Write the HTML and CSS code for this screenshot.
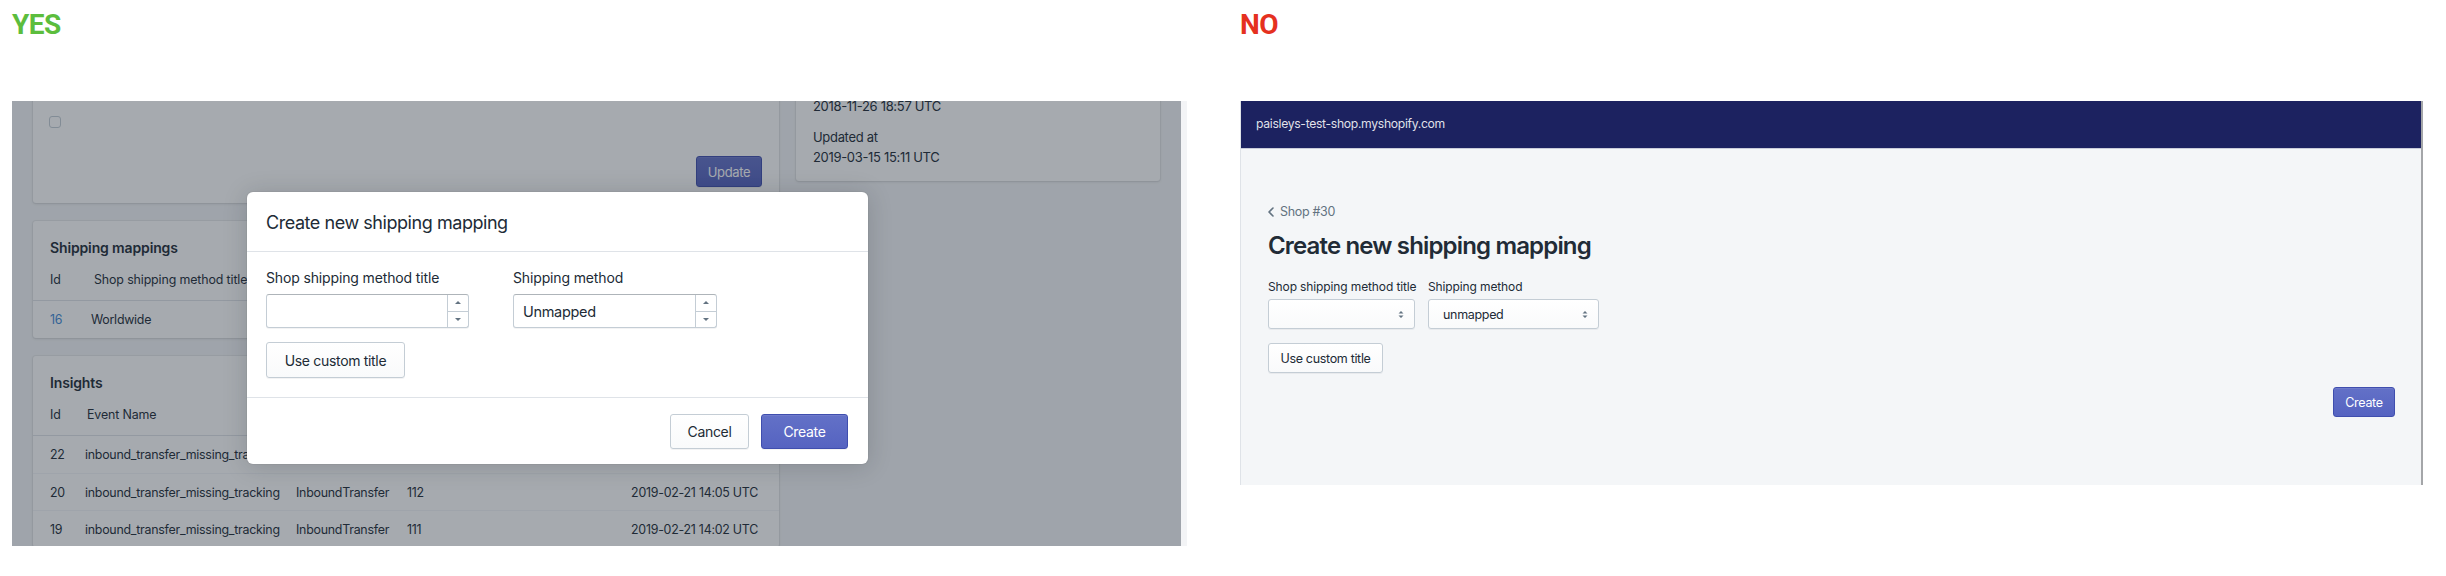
FILE: index.html
```html
<!DOCTYPE html>
<html lang="en">
<head>
<meta charset="utf-8">
<title>Create new shipping mapping – yes / no</title>
<link rel="stylesheet" href="styles.css">
</head>
<body>
<main class="compare">
  <section class="panel panel-yes">
    <h2 class="verdict verdict-yes">YES</h2>
    <div class="shot shot-yes">
      <div class="app">
        <div class="main-col">
          <div class="card card-settings">
            <span class="checkbox"></span>
            <div class="card-actions"><button class="btn-primary btn-update">Update</button></div>
          </div>
          <div class="card">
            <h3 class="card-title">Shipping mappings</h3>
            <div class="table table-mappings">
              <div class="tr th"><span>Id</span><span>Shop shipping method title</span></div>
              <div class="tr"><span class="link">16</span><span>Worldwide</span></div>
            </div>
          </div>
          <div class="card">
            <h3 class="card-title">Insights</h3>
            <div class="table table-insights">
              <div class="tr th"><span>Id</span><span>Event Name</span></div>
              <div class="tr"><span>22</span><span>inbound_transfer_missing_tracking</span></div>
              <div class="tr"><span>20</span><span>inbound_transfer_missing_tracking</span><span>InboundTransfer</span><span>112</span><span class="right">2019-02-21 14:05 UTC</span></div>
              <div class="tr"><span>19</span><span>inbound_transfer_missing_tracking</span><span>InboundTransfer</span><span>111</span><span class="right">2019-02-21 14:02 UTC</span></div>
            </div>
          </div>
        </div>
        <aside class="side-col">
          <div class="card card-meta">
            <span class="meta-first">2018-11-26 18:57 UTC</span>
            <div class="meta-group"><span>Updated at</span><span>2019-03-15 15:11 UTC</span></div>
          </div>
        </aside>
      </div>
      <div class="backdrop"></div>
      <div class="modal" role="dialog" aria-label="Create new shipping mapping">
        <div class="modal-header"><h2 class="modal-title">Create new shipping mapping</h2></div>
        <div class="modal-body">
          <div class="modal-fields">
            <div class="mfield mfield-title">
              <span class="mlabel">Shop shipping method title</span>
              <span class="num-input"><span class="num-value"></span><span class="spinner"><span class="spin"><i class="tri tri-up"></i></span><span class="spin"><i class="tri tri-down"></i></span></span></span>
            </div>
            <div class="mfield mfield-method">
              <span class="mlabel">Shipping method</span>
              <span class="num-input"><span class="num-value">Unmapped</span><span class="spinner"><span class="spin"><i class="tri tri-up"></i></span><span class="spin"><i class="tri tri-down"></i></span></span></span>
            </div>
          </div>
          <button class="btn-secondary btn-custom">Use custom title</button>
        </div>
        <div class="modal-footer">
          <button class="btn-secondary btn-cancel">Cancel</button>
          <button class="btn-primary btn-create">Create</button>
        </div>
      </div>
    </div>
  </section>

  <section class="panel panel-no">
    <h2 class="verdict verdict-no">NO</h2>
    <div class="shot shot-no">
      <header class="topbar">paisleys-test-shop.myshopify.com</header>
      <div class="page">
        <a class="breadcrumb"><svg class="chev" width="6" height="10" viewBox="0 0 6 10"><path d="M5 1 1 5l4 4" fill="none" stroke="#637381" stroke-width="1.6" stroke-linecap="round" stroke-linejoin="round"/></svg>Shop #30</a>
        <h1 class="page-title">Create new shipping mapping</h1>
        <div class="pfields">
          <div class="pfield pfield-title">
            <span class="plabel">Shop shipping method title</span>
            <span class="pselect"><span class="pselect-value"></span><svg class="updown" width="6" height="9" viewBox="0 0 6 9"><path d="M0.5 3.5 3 1l2.5 2.5zM0.5 5.5 3 8l2.5-2.5z" fill="#637381"/></svg></span>
          </div>
          <div class="pfield pfield-method">
            <span class="plabel">Shipping method</span>
            <span class="pselect"><span class="pselect-value">unmapped</span><svg class="updown" width="6" height="9" viewBox="0 0 6 9"><path d="M0.5 3.5 3 1l2.5 2.5zM0.5 5.5 3 8l2.5-2.5z" fill="#637381"/></svg></span>
          </div>
        </div>
        <button class="pbtn">Use custom title</button>
        <div class="page-actions"><button class="pbtn-primary">Create</button></div>
      </div>
    </div>
  </section>
</main>
</body>
</html>
```

FILE: styles.css
```css
* { box-sizing: border-box; }

html, body {
  margin: 0;
  background: #ffffff;
}

body {
  width: 2446px;
  height: 576px;
  overflow: hidden;
  font-family: Inter, "Noto Sans", "Liberation Sans", sans-serif;
  color: #212b36;
  letter-spacing: -0.02em;
}

button {
  font: inherit;
  letter-spacing: inherit;
  cursor: pointer;
}

.compare {
  display: flex;
  align-items: flex-start;
}

.panel-yes {
  margin-left: 12px;
  width: 1175px;
}

.panel-no {
  margin-left: 53px;
  width: 1183px;
}

.verdict {
  margin: 0;
  height: 101px;
  padding-top: 11px;
  font: 700 28px/28px Roboto, "Liberation Sans", sans-serif;
  letter-spacing: -0.5px;
}
.verdict-yes { color: #5cbd3d; }
.verdict-no { color: #e5311f; }

/* ---------- YES screenshot ---------- */
.shot-yes {
  position: relative;
  width: 1175px;
  height: 445px;
  background: #f4f6f8;
  border-right: 6px solid #f3f4f6;
  overflow: hidden;
}

.app {
  display: flex;
  gap: 17px;
  padding: 0 21px;
  margin-top: -100px;
}

.main-col {
  width: 746px;
  display: flex;
  flex-direction: column;
  gap: 18px;
}

.side-col {
  width: 364px;
}

.card {
  background: #ffffff;
  border-radius: 3px;
  box-shadow: 0 0 0 1px rgba(63, 63, 68, 0.05), 0 1px 3px 0 rgba(63, 63, 68, 0.15);
}

.card-settings {
  height: 202px;
  display: flex;
  flex-direction: column;
  justify-content: flex-end;
  padding: 0 17px 16px 16px;
}

.checkbox {
  display: block;
  width: 12px;
  height: 12px;
  border: 1px solid #c4cdd5;
  border-radius: 3px;
  background: #fff;
  margin-bottom: 28px;
}

.card-actions {
  display: flex;
  justify-content: flex-end;
}

.btn-primary {
  border: 1px solid #3f4eae;
  border-radius: 3px;
  background: linear-gradient(#6371c7, #5563c1);
  box-shadow: inset 0 1px 0 0 #6f7bcb, 0 1px 0 0 rgba(22, 29, 37, 0.05);
  color: #ffffff;
  padding: 0;
}

.btn-secondary {
  border: 1px solid #c4cdd5;
  border-radius: 3px;
  background: linear-gradient(#ffffff, #f9fafb);
  box-shadow: 0 1px 0 0 rgba(22, 29, 37, 0.05);
  color: #212b36;
  padding: 0;
}

.btn-update {
  width: 66px;
  height: 31px;
  font-size: 13px;
}

.card-title {
  margin: 0;
  padding: 17px 17px 0;
  font-size: 14px;
  line-height: 20px;
  font-weight: 600;
  letter-spacing: -0.01em;
}

.tr {
  display: grid;
  align-items: center;
  padding: 0 21px 0 17px;
  height: 37px;
  font-size: 12.4px;
  letter-spacing: -0.02em;
  white-space: nowrap;
}

.tr + .tr:not(.th) {
  border-top: 1px solid #f4f6f8;
}

.tr.th {
  height: 43px;
  border-bottom: 1px solid #dfe3e8;
  font-size: 12.4px;
  letter-spacing: -0.01em;
}

.tr.th + .tr {
  border-top: 0;
}

.table-mappings .tr { grid-template-columns: 44px 1fr; }
.table-mappings .tr:not(.th) { grid-template-columns: 41px 1fr; }

.table-insights .tr { grid-template-columns: 35px 211px 111px 1fr auto; }
.table-insights .tr.th span:nth-child(2) { padding-left: 2px; }

.right { text-align: right; }
.link { color: #3f8ad6; }

.card-meta {
  height: 180px;
  display: flex;
  flex-direction: column;
  justify-content: flex-end;
  gap: 16px;
  padding: 0 17px 14px;
  font-size: 13px;
  line-height: 20px;
}

.meta-first {
  display: block;
  line-height: 10px;
}

.meta-group {
  display: flex;
  flex-direction: column;
}

.backdrop {
  position: absolute;
  inset: 0;
  background: rgba(33, 43, 54, 0.4);
}

/* modal */
.modal {
  position: absolute;
  left: 235px;
  top: 91px;
  width: 621px;
  height: 272px;
  background: #ffffff;
  border-radius: 6px;
  box-shadow: 0 0 0 1px rgba(63, 63, 68, 0.05), 0 2px 24px rgba(20, 25, 35, 0.18);
  display: flex;
  flex-direction: column;
}

.modal-header {
  height: 60px;
  border-bottom: 1px solid #dfe3e8;
  display: flex;
  align-items: center;
  padding: 0 19px;
}

.modal-title {
  margin: 0;
  font-size: 18px;
  font-weight: 400;
  line-height: 24px;
  padding-top: 2px;
  letter-spacing: -0.025em;
}

.modal-body {
  height: 145px;
  padding: 16px 20px 0 19px;
}

.modal-fields {
  display: flex;
  gap: 44px;
}

.mfield {
  display: flex;
  flex-direction: column;
}
.mfield-title { width: 203px; }
.mfield-method { width: 204px; }

.mlabel {
  font-size: 14px;
  line-height: 20px;
  margin-bottom: 6px;
  white-space: nowrap;
  letter-spacing: -0.01em;
}

.num-input {
  display: flex;
  height: 34px;
  border: 1px solid #c4cdd5;
  border-top-color: #aeb4b9;
  border-radius: 3px;
  box-shadow: 0 1px 0 0 rgba(22, 29, 37, 0.05);
  background: #fff;
}

.num-value {
  flex: 1;
  display: flex;
  align-items: center;
  padding-left: 9px;
  font-size: 14.5px;
}

.spinner {
  width: 21px;
  display: flex;
  flex-direction: column;
  border-left: 1px solid #c4cdd5;
}

.spin {
  flex: 1;
  display: flex;
  align-items: center;
  justify-content: center;
}
.spin + .spin { border-top: 1px solid #c4cdd5; }

.tri {
  display: block;
  width: 0;
  height: 0;
  border-left: 3px solid transparent;
  border-right: 3px solid transparent;
}
.tri-up { border-bottom: 3px solid #637381; }
.tri-down { border-top: 3px solid #637381; }

.btn-custom {
  display: block;
  margin-top: 14px;
  width: 139px;
  height: 36px;
  font-size: 14px;
}

.modal-footer {
  flex: 1;
  border-top: 1px solid #dfe3e8;
  display: flex;
  align-items: center;
  justify-content: flex-end;
  gap: 12px;
  padding: 0 20px;
}

.btn-cancel { width: 79px; height: 35px; font-size: 14px; }
.btn-create { width: 87px; height: 35px; font-size: 14px; }

/* ---------- NO screenshot ---------- */
.shot-no {
  width: 1183px;
  height: 384px;
  background: #f4f6f8;
  border-left: 1px solid #dfe3e8;
  border-right: 2px solid #a4a6a9;
  display: flex;
  flex-direction: column;
}

.topbar {
  height: 48px;
  flex: none;
  background: #1c2260;
  border-bottom: 1px solid #c9ccd9;
  color: rgba(255, 255, 255, 0.88);
  font-size: 12.2px;
  display: flex;
  align-items: center;
  padding-left: 15px;
  padding-bottom: 2px;
}

.page {
  flex: 1;
  padding: 53px 26px 0 27px;
  display: flex;
  flex-direction: column;
  align-items: flex-start;
}

.breadcrumb {
  display: flex;
  align-items: center;
  gap: 6px;
  color: #637381;
  font-size: 12.5px;
  line-height: 20px;
}

.page-title {
  margin: 10px 0 0;
  font-size: 24px;
  line-height: 28px;
  font-weight: 600;
  letter-spacing: -0.035em;
}

.pfields {
  display: flex;
  gap: 13px;
  margin-top: 19px;
}

.pfield {
  display: flex;
  flex-direction: column;
}
.pfield-title { width: 147px; }
.pfield-method { width: 171px; }

.plabel {
  font-size: 12px;
  line-height: 16px;
  margin-bottom: 4px;
  white-space: nowrap;
  letter-spacing: -0.01em;
}

.pselect {
  height: 30px;
  display: flex;
  align-items: center;
  justify-content: space-between;
  padding: 0 10px 0 14px;
  border: 1px solid #c4cdd5;
  border-radius: 3px;
  background: linear-gradient(#ffffff, #f9fafb);
  box-shadow: 0 1px 0 0 rgba(22, 29, 37, 0.05);
  font-size: 12.5px;
}

.pbtn {
  margin-top: 14px;
  width: 115px;
  height: 30px;
  border: 1px solid #c4cdd5;
  border-radius: 3px;
  background: linear-gradient(#ffffff, #f9fafb);
  box-shadow: 0 1px 0 0 rgba(22, 29, 37, 0.05);
  color: #212b36;
  font-size: 12.5px;
  padding: 0;
}

.page-actions {
  align-self: stretch;
  display: flex;
  justify-content: flex-end;
  margin-top: 14px;
}

.pbtn-primary {
  width: 62px;
  height: 30px;
  border: 1px solid #3f4eae;
  border-radius: 3px;
  background: linear-gradient(#6371c7, #5563c1);
  box-shadow: inset 0 1px 0 0 #6f7bcb;
  color: #ffffff;
  font-size: 12.5px;
  padding: 0;
}
```
